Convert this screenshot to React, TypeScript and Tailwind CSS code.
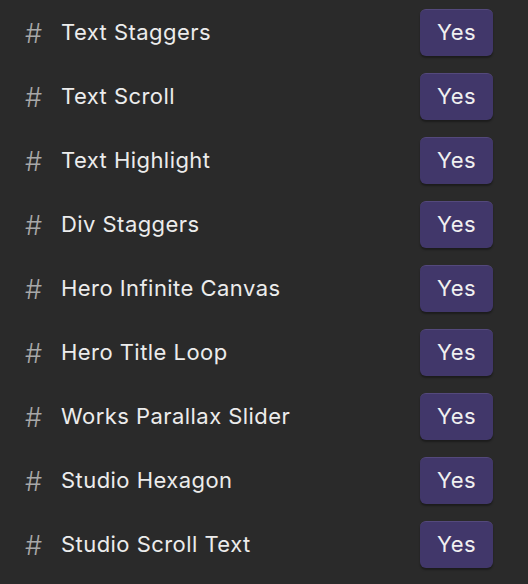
const items = [
  "Text Staggers",
  "Text Scroll",
  "Text Highlight",
  "Div Staggers",
  "Hero Infinite Canvas",
  "Hero Title Loop",
  "Works Parallax Slider",
  "Studio Hexagon",
  "Studio Scroll Text",
];

export default function App() {
  return (
    <div className="w-[528px] h-[584px] bg-[#2a2a2a] font-['Inter',sans-serif] flex flex-col">
      {items.map((name) => (
        <div key={name} className="h-16 flex items-center pl-[25px] pr-[35px]">
          <span className="w-9 text-[27px] leading-none font-light text-[#a8a8a8] pt-[2px]">#</span>
          <span className="flex-1 text-[22px] text-[#ececec] tracking-[0.45px]">{name}</span>
          <button className="w-[73px] h-[47px] rounded-[6px] bg-[#41376a] border-t border-[#54497c] shadow-[0_2px_2px_rgba(0,0,0,0.35)] text-[22px] tracking-[0.4px] text-[#f0f0f0]">
            Yes
          </button>
        </div>
      ))}
    </div>
  );
}
